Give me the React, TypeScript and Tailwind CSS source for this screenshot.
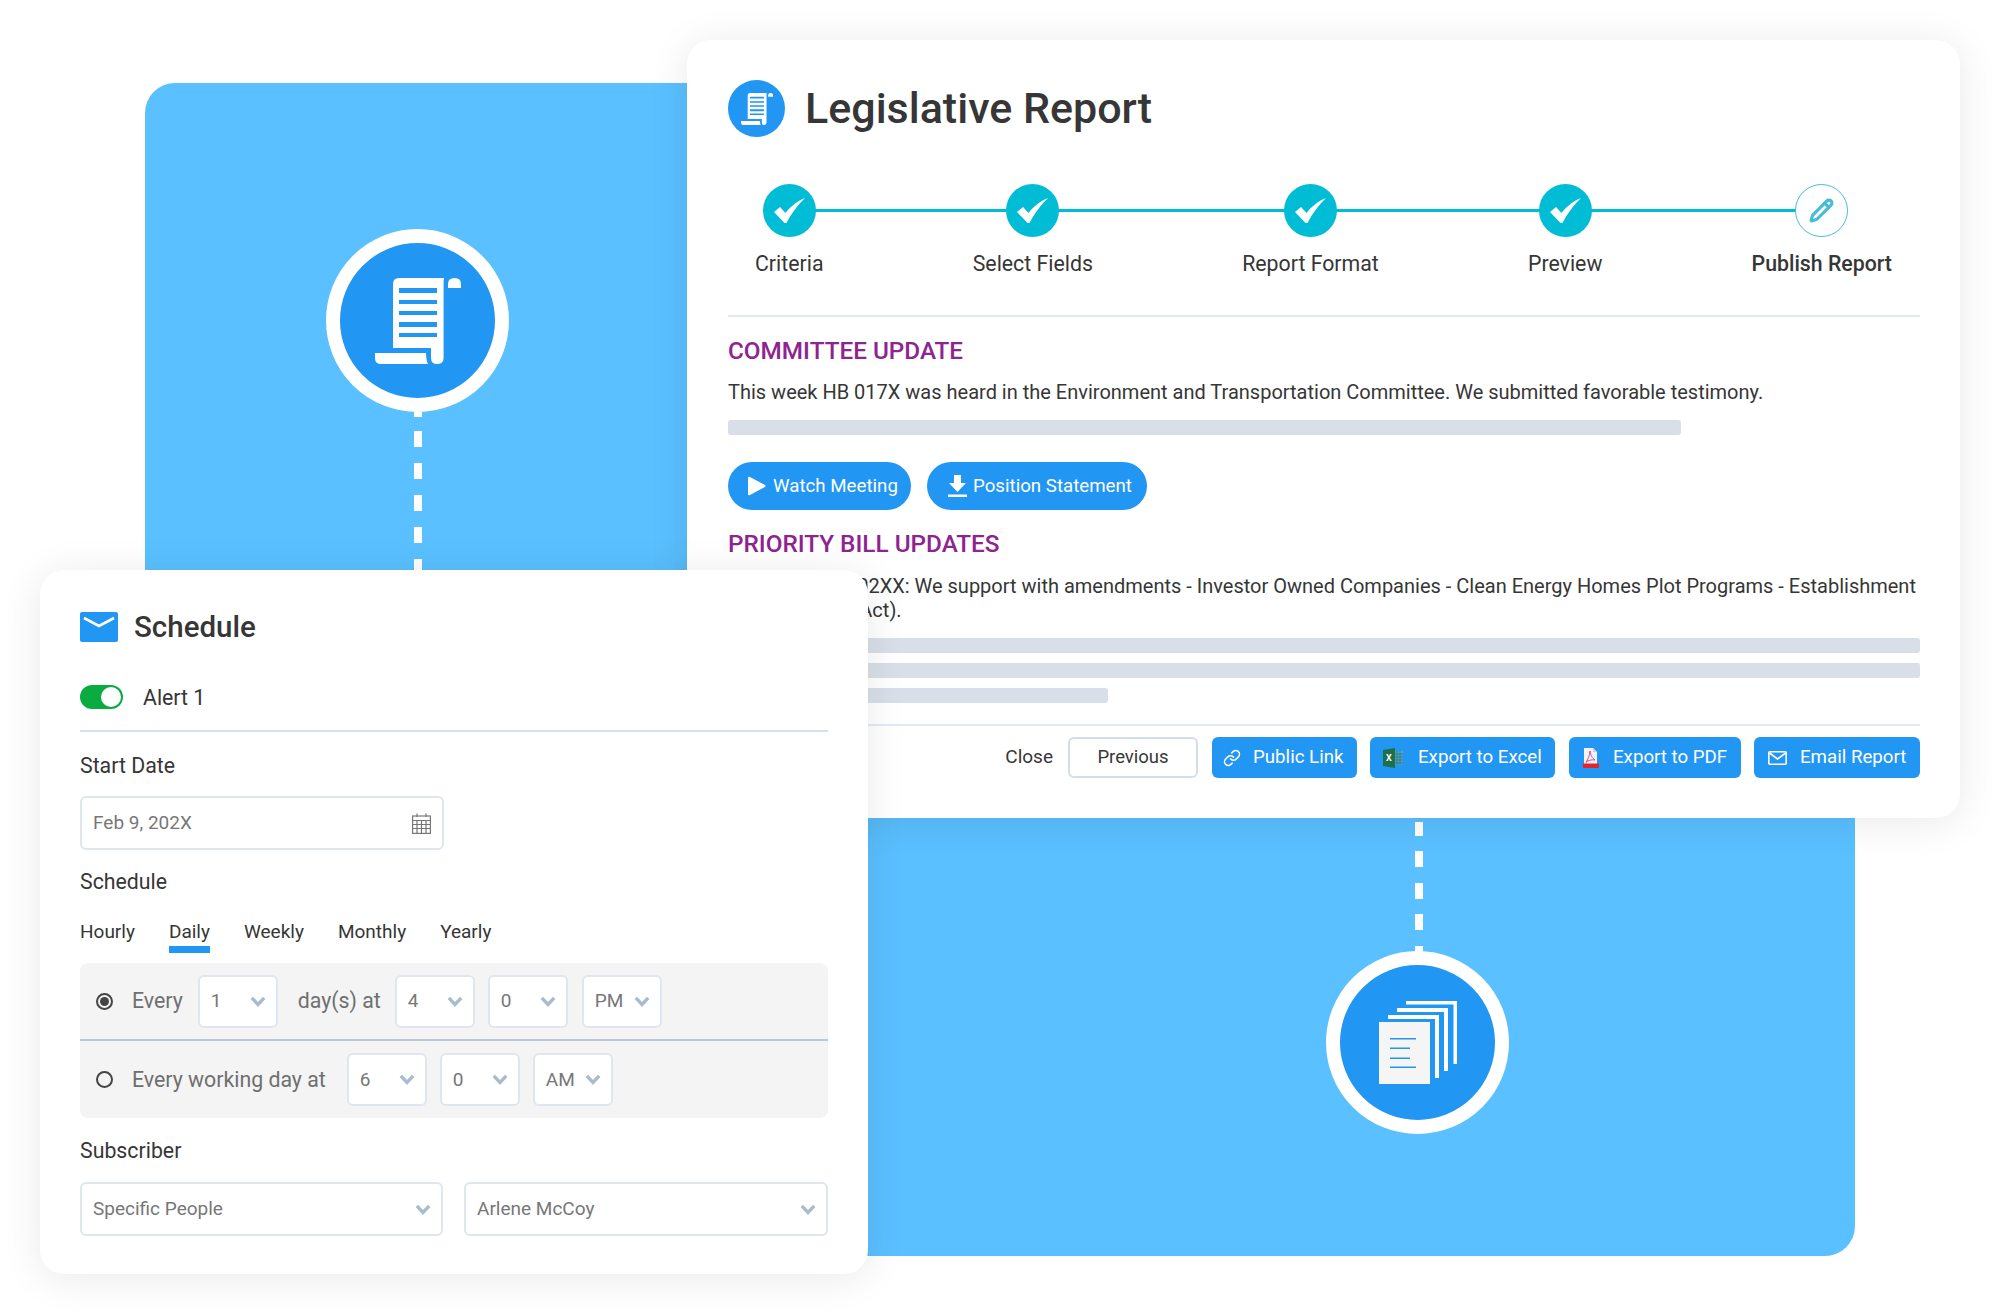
import { Link, Pencil } from "lucide-react";

const steps = [
  { label: "Criteria", done: true },
  { label: "Select Fields", done: true },
  { label: "Report Format", done: true },
  { label: "Preview", done: true },
  { label: "Publish Report", done: false },
];

const tabs = ["Hourly", "Daily", "Weekly", "Monthly", "Yearly"];

function ScrollIcon({ size }: { size: number }) {
  return (
    <svg width={size} height={size} viewBox="0 0 86 86">
      <path
        d="M18 6Q18 0 24 0H69Q68.6 2 68.6 6V80Q68.6 86 62 86Q56 86 56 80V70H18Z"
        fill="#fff"
      />
      <path d="M24 10h38v5H24zM24 22h38v4H24zM24 33h38v4H24zM24 44h38v5H24zM24 55h38v4H24z" fill="#2196f3" />
      <path d="M0 75H51Q51 82 53 86H6Q0 86 0 80Z" fill="#fff" />
      <path d="M73 10V6Q73 0 79.5 0Q86 0 86 6V10Z" fill="#fff" />
    </svg>
  );
}

function PagesIcon() {
  return (
    <svg width="78" height="83" viewBox="0 0 78 83">
      <path d="M27 0H78V63H74.5V3.5H27Z" fill="#fff" />
      <path d="M18 7H69V70H65V11H18Z" fill="#fff" />
      <path d="M9 14H60V77H56V18H9Z" fill="#fff" />
      <rect x="0" y="21" width="51" height="62" fill="#f5f5f5" />
      <path d="M11 37h26v1.6H11zM11 46.5h20v1.6H11zM11 56.5h20v1.6H11zM11 65.5h26v1.6H11z" fill="#2196f3" />
    </svg>
  );
}

function Hub({ children }: { children: React.ReactNode }) {
  return (
    <div className="flex h-[183px] w-[183px] items-center justify-center rounded-full border-[14px] border-white bg-[#2196f3]">
      {children}
    </div>
  );
}

function Check() {
  return (
    <svg width="31" height="25" viewBox="0 0 31 25">
      <path d="M0 14L6 9L11.5 15C16 9 23 3 31 0C24 7 17 16 12.5 25H10.5Z" fill="#fff" />
    </svg>
  );
}

function Chevron() {
  return (
    <svg width="16" height="11" viewBox="0 0 16 11" className="shrink-0">
      <path d="M1.8 1.8L8 8.5L14.2 1.8" fill="none" stroke="#a9bccd" strokeWidth="3.4" />
    </svg>
  );
}

function Select({ value, className }: { value: string; className: string }) {
  return (
    <div
      className={`flex h-[53px] items-center justify-between rounded-md border-2 border-[#dfe6ef] bg-white pl-[11px] pr-[10px] text-[19px] text-[#777] ${className}`}
    >
      <span className="mt-[1px]">{value}</span>
      <Chevron />
    </div>
  );
}

function Radio({ on }: { on?: boolean }) {
  return (
    <span className="flex h-[17px] w-[17px] shrink-0 items-center justify-center rounded-full border-2 border-[#444]">
      {on && <span className="h-[9px] w-[9px] rounded-full bg-[#444]" />}
    </span>
  );
}

function ExcelIcon() {
  return (
    <svg width="20" height="20" viewBox="0 0 20 20">
      <rect x="9" y="3" width="11" height="14" fill="#4f9fd8" />
      <path d="M11 3v14M14 3v14M17 3v14M9 6h11M9 9h11M9 12h11M9 15h11" stroke="#2c7f6b" strokeWidth="0.8" />
      <path d="M0 2L12 0V20L0 18Z" fill="#1d7048" />
      <text x="3" y="13" fontSize="9" fontWeight="700" fill="#fff" fontFamily="Roboto">
        X
      </text>
    </svg>
  );
}

function PdfIcon() {
  return (
    <svg width="16" height="20" viewBox="0 0 16 20">
      <path d="M1 0H10L14 4V20H1Z" fill="#f7f3f5" />
      <path d="M10 0L14 4H10Z" fill="#d9cdd3" />
      <path d="M7 3C8 8 9 10 12 12C9 11.5 5 12 3 14.5C5 11 6.5 8 7 3Z" fill="none" stroke="#c9509f" strokeWidth="1" />
      <rect x="0" y="15.5" width="16" height="4.5" fill="#e3242b" />
    </svg>
  );
}

function MailIcon() {
  return (
    <svg width="19" height="14" viewBox="0 0 19 14">
      <rect x="0.8" y="0.8" width="17.4" height="12.4" rx="1" fill="none" stroke="#fff" strokeWidth="1.6" />
      <path d="M1.5 2L9.5 8L17.5 2" fill="none" stroke="#fff" strokeWidth="1.6" />
    </svg>
  );
}

function ActionButton({
  icon,
  label,
  className,
}: {
  icon: React.ReactNode;
  label: string;
  className: string;
}) {
  return (
    <button className={`flex h-[41px] items-center rounded-md bg-[#2196f3] text-[18.7px] text-white ${className}`}>
      {icon}
      <span>{label}</span>
    </button>
  );
}

export default function App() {
  return (
    <div className="relative h-[1315px] w-[2000px] overflow-hidden bg-white font-[Roboto,sans-serif] text-[#363636]">
      {/* blue backdrop */}
      <div className="absolute left-[145px] top-[83px] h-[1173px] w-[1710px] rounded-[30px] bg-[#5ac0ff]">
        <div className="absolute left-[181px] top-[146px]">
          <Hub>
            <ScrollIcon size={86} />
          </Hub>
        </div>
        <svg className="absolute left-[269px] top-[329px]" width="8" height="160">
          <path d="M4 0V5M4 19V35M4 51V67M4 83V99M4 115V131M4 147V160" stroke="#fff" strokeWidth="8" />
        </svg>
        <div className="absolute left-[1181px] top-[868px]">
          <Hub>
            <PagesIcon />
          </Hub>
        </div>
        <svg className="absolute left-[1270px] top-[739px]" width="8" height="130">
          <path d="M4 0V14M4 29V45M4 61V77M4 92V108M4 124V130" stroke="#fff" strokeWidth="8" />
        </svg>
      </div>

      {/* report card */}
      <div className="absolute left-[687px] top-[40px] h-[778px] w-[1273px] rounded-[24px] bg-white pl-[41px] pr-[40px] pt-[40px] shadow-[0_4px_40px_rgba(0,0,0,0.09)]">
        <div className="flex h-[57px] items-center">
          <div className="flex h-[57px] w-[57px] items-center justify-center rounded-full bg-[#2196f3]">
            <ScrollIcon size={32} />
          </div>
          <h1 className="ml-[20px] text-[43px] font-medium leading-none">Legislative Report</h1>
        </div>

        <div className="relative mt-[47px] flex justify-between pl-[27px] pr-[28px]">
          <div className="absolute left-[61px] top-[25px] h-[3px] w-[1033px] bg-[#00bcd4]" />
          {steps.map((step) => (
            <div key={step.label} className="relative flex flex-col items-center">
              {step.done ? (
                <div className="flex h-[53px] w-[53px] items-center justify-center rounded-full bg-[#00bcd4]">
                  <Check />
                </div>
              ) : (
                <div className="flex h-[53px] w-[53px] items-center justify-center rounded-full border border-[#45bcd8] bg-white">
                  <Pencil size={25} strokeWidth={3} color="#45bcd8" />
                </div>
              )}
              <span className={`mt-[14px] text-[21.3px] leading-[26px] ${step.done ? "" : "font-medium"}`}>
                {step.label}
              </span>
            </div>
          ))}
        </div>

        <div className="mt-[38px] h-[2px] bg-[#e2eaf3]" />

        <h2 className="mt-[19px] text-[24.3px] font-medium leading-[30px] text-[#8e2490]">COMMITTEE UPDATE</h2>
        <p className="mt-[13px] text-[20px] leading-[26px]">
          This week HB 017X was heard in the Environment and Transportation Committee. We submitted favorable testimony.
        </p>
        <div className="mt-[15px] h-[15px] w-[953px] rounded-[3px] bg-[#d8dfe8]" />

        <div className="mt-[27px] flex gap-[16px]">
          <button className="flex h-[48px] w-[183px] items-center rounded-full bg-[#2196f3] pl-[20px] text-[18.7px] text-white">
            <svg width="18" height="20" viewBox="0 0 18 20" className="mr-[7px]">
              <path d="M0 2Q0 0 2 1L17 9Q18 10 17 11L2 19Q0 20 0 18Z" fill="#fff" />
            </svg>
            Watch Meeting
          </button>
          <button className="flex h-[48px] w-[220px] items-center rounded-full bg-[#2196f3] pl-[21px] text-[18.7px] text-white">
            <svg width="19" height="22" viewBox="0 0 19 22" className="mr-[6px]">
              <path d="M6 0H13V8H18L9.5 17L1 8H6ZM0 19.5H19V22H0Z" fill="#fff" />
            </svg>
            Position Statement
          </button>
        </div>

        <h2 className="mt-[19px] text-[24.3px] font-medium leading-[30px] text-[#8e2490]">PRIORITY BILL UPDATES</h2>
        <p className="mt-[15px] whitespace-nowrap text-[20px] leading-[24px]">
          Senate Bill No 02XX: We support with amendments - Investor Owned Companies - Clean Energy Homes Plot Programs - Establishment
          <br />
          (Clean Homes Act).
        </p>
        <div className="mt-[16px] flex flex-col gap-[10px]">
          <div className="h-[15px] rounded-[3px] bg-[#d8dfe8]" />
          <div className="h-[15px] rounded-[3px] bg-[#d8dfe8]" />
          <div className="h-[15px] w-[380px] rounded-[3px] bg-[#d8dfe8]" />
        </div>

        <div className="mt-[21px] h-[2px] bg-[#e2eaf3]" />

        <div className="mt-[11px] flex items-center justify-end">
          <span className="mr-[15px] text-[19px]">Close</span>
          <button className="mr-[14px] h-[41px] w-[130px] rounded-md border-2 border-[#d3deea] text-[18.5px]">Previous</button>
          <ActionButton
            className="mr-[13px] w-[145px] pl-[11px]"
            icon={<Link size={18} className="mr-[12px]" />}
            label="Public Link"
          />
          <ActionButton
            className="mr-[14px] w-[185px] pl-[13px]"
            icon={
              <span className="mr-[15px]">
                <ExcelIcon />
              </span>
            }
            label="Export to Excel"
          />
          <ActionButton
            className="mr-[13px] w-[172px] pl-[14px]"
            icon={
              <span className="mr-[14px]">
                <PdfIcon />
              </span>
            }
            label="Export to PDF"
          />
          <ActionButton
            className="w-[166px] pl-[14px]"
            icon={
              <span className="mr-[13px]">
                <MailIcon />
              </span>
            }
            label="Email Report"
          />
        </div>
      </div>

      {/* schedule card */}
      <div className="absolute left-[40px] top-[570px] h-[704px] w-[828px] rounded-[24px] bg-white px-[40px] pt-[42px] shadow-[0_4px_40px_rgba(0,0,0,0.09)]">
        <div className="flex h-[30px] items-center">
          <svg width="38" height="30" viewBox="0 0 38 30">
            <rect width="38" height="30" rx="2" fill="#2196f3" />
            <path d="M4 6L19 14L34 6" fill="none" stroke="#fff" strokeWidth="2.6" />
          </svg>
          <h2 className="ml-[16px] mt-[2px] text-[29.5px] font-medium leading-none">Schedule</h2>
        </div>

        <div className="mt-[43px] flex h-[24px] items-center">
          <div className="flex h-[24px] w-[43px] items-center justify-end rounded-full bg-[#0aac41] pr-[2px]">
            <div className="h-[20px] w-[20px] rounded-full bg-white" />
          </div>
          <span className="ml-[20px] mt-[1px] text-[21.3px] leading-[26px]">Alert 1</span>
        </div>
        <div className="mt-[21px] h-[2px] bg-[#d5e0ec]" />

        <div className="mt-[21px] text-[21.3px] leading-[26px]">Start Date</div>
        <div className="mt-[17px] flex h-[54px] w-[364px] items-center justify-between rounded-md border-2 border-[#dfe6ef] pl-[11px] pr-[11px] text-[19px] text-[#777]">
          <span className="mt-[1px]">Feb 9, 202X</span>
          <svg width="19" height="21" viewBox="0 0 19 21" fill="none" stroke="#777" strokeWidth="1.2">
            <rect x="0.6" y="3" width="17.8" height="17.4" />
            <path d="M0.6 7.5H18.4M0.6 11.5H18.4M0.6 15.5H18.4M5 7.5V20.4M9.5 7.5V20.4M14 7.5V20.4M5 0.5V4M14 0.5V4" />
          </svg>
        </div>

        <div className="mt-[19px] text-[21.3px] leading-[26px]">Schedule</div>
        <div className="mt-[25px] flex gap-[34px] text-[19px]">
          {tabs.map((tab) => (
            <span
              key={tab}
              className={`h-[33px] leading-[24px] ${tab === "Daily" ? "border-b-[7px] border-[#2196f3]" : ""}`}
            >
              {tab}
            </span>
          ))}
        </div>

        <div className="mt-[10px] rounded-lg bg-[#f4f4f5] text-[21.3px] text-[#6f6f6f]">
          <div className="flex h-[78px] items-center border-b-2 border-[#b9c9da] pl-[16px]">
            <Radio on />
            <span className="ml-[19px]">Every</span>
            <Select value="1" className="ml-[15px] w-[80px]" />
            <span className="ml-[20px]">day(s) at</span>
            <Select value="4" className="ml-[14px] w-[80px]" />
            <Select value="0" className="ml-[13px] w-[80px]" />
            <Select value="PM" className="ml-[14px] w-[80px]" />
          </div>
          <div className="flex h-[77px] items-center pl-[16px]">
            <Radio />
            <span className="ml-[19px]">Every working day at</span>
            <Select value="6" className="ml-[21px] w-[80px]" />
            <Select value="0" className="ml-[13px] w-[80px]" />
            <Select value="AM" className="ml-[13px] w-[80px]" />
          </div>
        </div>

        <div className="mt-[20px] text-[21.3px] leading-[26px]">Subscriber</div>
        <div className="mt-[18px] flex gap-[21px]">
          <Select value="Specific People" className="!h-[54px] w-[363px]" />
          <Select value="Arlene McCoy" className="!h-[54px] w-[364px]" />
        </div>
      </div>
    </div>
  );
}
